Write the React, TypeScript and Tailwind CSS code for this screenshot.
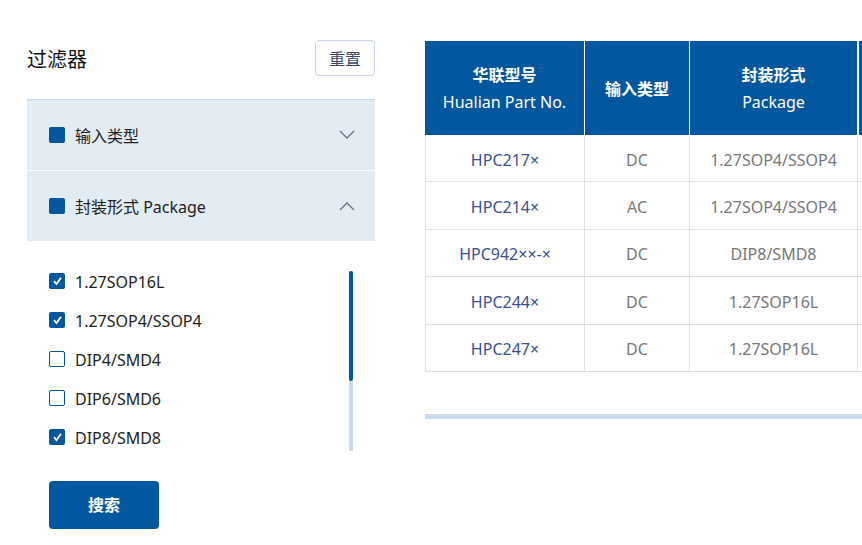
import React from "react";

const font = { fontFamily: '"Noto Sans", "Noto Sans CJK SC", sans-serif' };

const items = [
  { label: "1.27SOP16L", checked: true },
  { label: "1.27SOP4/SSOP4", checked: true },
  { label: "DIP4/SMD4", checked: false },
  { label: "DIP6/SMD6", checked: false },
  { label: "DIP8/SMD8", checked: true },
];

const rows = [
  ["HPC217×", "DC", "1.27SOP4/SSOP4"],
  ["HPC214×", "AC", "1.27SOP4/SSOP4"],
  ["HPC942××-×", "DC", "DIP8/SMD8"],
  ["HPC244×", "DC", "1.27SOP16L"],
  ["HPC247×", "DC", "1.27SOP16L"],
];

function Chevron({ up }: { up?: boolean }) {
  return (
    <svg width="16" height="10" viewBox="0 0 16 10" fill="none">
      <path
        d={up ? "M1 9 L8 2 L15 9" : "M1 1 L8 8 L15 1"}
        stroke="#6b7280"
        strokeWidth="1.3"
      />
    </svg>
  );
}

function Check({ checked }: { checked: boolean }) {
  return checked ? (
    <div className="w-[16px] h-[16px] shrink-0 rounded-[2px] bg-[#02579e] flex items-center justify-center">
      <svg width="11" height="10" viewBox="0 0 11 10" fill="none">
        <path d="M2 5.2 L4.5 8 L9 1.8" stroke="white" strokeWidth="1.8" />
      </svg>
    </div>
  ) : (
    <div className="w-[16px] h-[16px] shrink-0 rounded-[2px] border border-[#02579e] bg-white" />
  );
}

export default function App() {
  return (
    <div className="w-[862px] h-[545px] bg-white overflow-hidden flex" style={font}>
      <div className="w-[348px] ml-[27px] shrink-0 pt-[40px]">
        <div className="flex items-center justify-between h-[36px]">
          <div className="text-[20px] text-[#111] pt-[3px]">过滤器</div>
          <button className="w-[60px] h-[36px] rounded-[4px] border border-[#c8d6e5] text-[16px] text-[#3a4a6a] bg-white pt-[1px]">
            重置
          </button>
        </div>
        <div className="mt-[23px] border-t border-[#c6d6e6] bg-[#e3ebf3] h-[71px] flex items-center pl-[22px] pr-[20px]">
          <div className="w-[16px] h-[16px] rounded-[2px] bg-[#02579e]" />
          <div className="ml-[10px] text-[16px] text-[#222] flex-1 pt-[1px]">输入类型</div>
          <Chevron />
        </div>
        <div className="mt-[1px] bg-[#e3ebf3] h-[70px] flex items-center pl-[22px] pr-[20px]">
          <div className="w-[16px] h-[16px] rounded-[2px] bg-[#02579e]" />
          <div className="ml-[10px] text-[16px] text-[#222] flex-1 pt-[1px]">封装形式 Package</div>
          <Chevron up />
        </div>
        <div className="mt-[30px] flex h-[180px] pl-[22px] pr-[22px]">
          <div className="flex-1 flex flex-col gap-[23px] pt-[2px]">
            {items.map((it) => (
              <div key={it.label} className="flex items-center h-[16px]">
                <Check checked={it.checked} />
                <span className="ml-[10px] text-[16px] text-[#222] pt-[2px]">{it.label}</span>
              </div>
            ))}
          </div>
          <div className="w-[4px] h-[180px] bg-[#cddcea] rounded-[1px] flex flex-col">
            <div className="h-[110px] bg-[#02579e] rounded-[2px]" />
          </div>
        </div>
        <button className="mt-[30px] ml-[22px] w-[110px] h-[48px] rounded-[4px] bg-[#02579e] text-white text-[16px] font-bold">
          搜索
        </button>
      </div>

      <div className="ml-[50px] pt-[41px] flex-1 overflow-hidden">
        <div className="w-[500px]">
          <div className="flex h-[94px] bg-[#02579e] text-white text-[16px] font-semibold leading-[27px]">
            <div className="w-[160px] flex flex-col items-center justify-center border-r border-white pt-[2px]">
              <div>华联型号</div>
              <div className="font-normal">Hualian Part No.</div>
            </div>
            <div className="w-[105px] flex flex-col items-center justify-center border-r border-white pt-[2px]">
              <div>输入类型</div>
            </div>
            <div className="w-[169px] flex flex-col items-center justify-center border-r-2 border-white pt-[2px]">
              <div>封装形式</div>
              <div className="font-normal">Package</div>
            </div>
            <div className="flex-1" />
          </div>
          {rows.map((r) => (
            <div key={r[0]} className="flex h-[47.4px] border-b border-l border-[#e0e0e0] text-[16px]">
              <div className="w-[159px] flex items-center justify-center border-r border-[#e0e0e0] text-[#3a4f94] pt-[3px]">
                {r[0]}
              </div>
              <div className="w-[105px] flex items-center justify-center border-r border-[#e0e0e0] text-[#777] pt-[3px]">
                {r[1]}
              </div>
              <div className="w-[168px] flex items-center justify-center border-r border-[#e0e0e0] text-[#777] pt-[3px]">
                {r[2]}
              </div>
              <div className="flex-1" />
            </div>
          ))}
        </div>
        <div className="mt-[42px] h-[5px] bg-[#cddcea]" />
      </div>
    </div>
  );
}
